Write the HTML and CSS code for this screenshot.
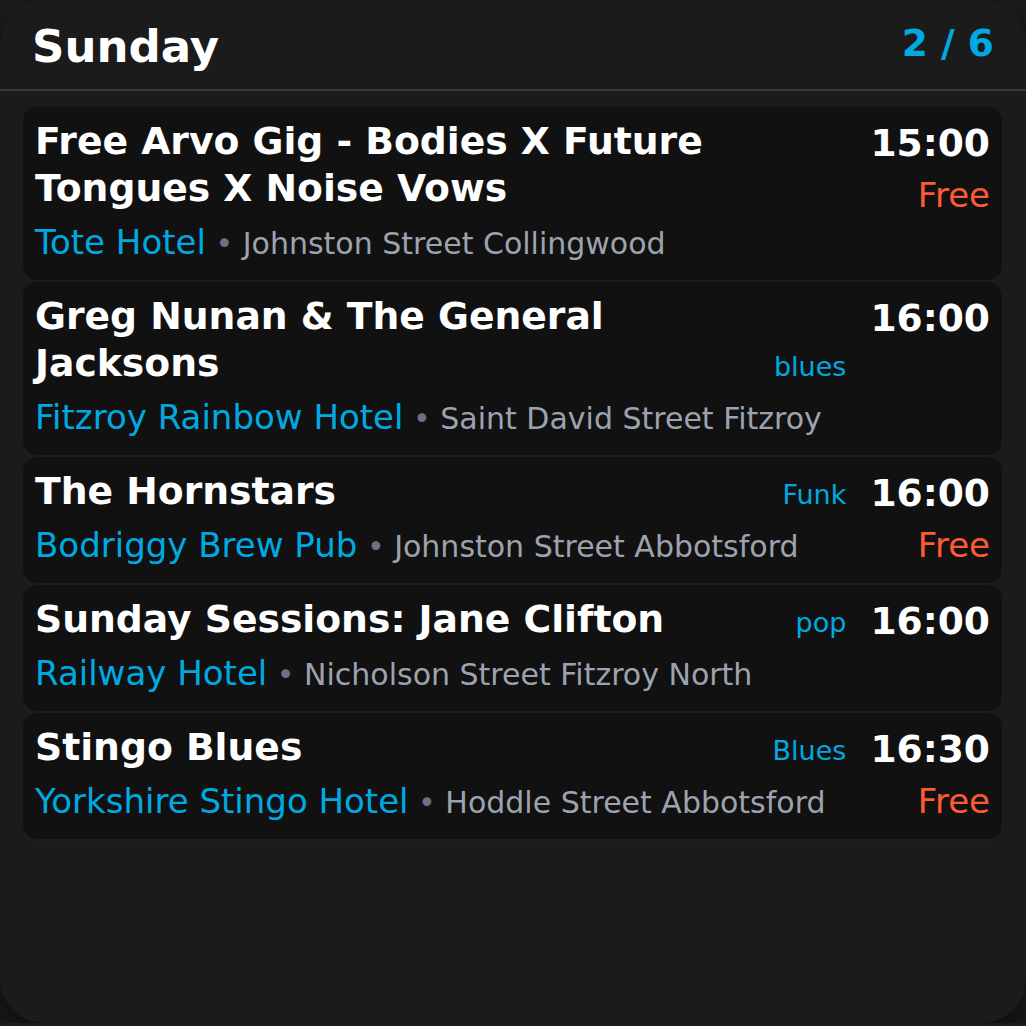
FILE: index.html
```
<!DOCTYPE html>
<html lang="en">
<head>
<meta charset="utf-8">
<title>Sunday gigs</title>
<link rel="stylesheet" href="styles.css">
</head>
<body>
<div class="app">
  <header class="head">
    <h1 class="day">Sunday</h1>
    <span class="count">2 / 6</span>
  </header>
  <ul class="list">
    <li class="card">
      <div class="main">
        <div class="top"><h2 class="title">Free Arvo Gig - Bodies X Future Tongues X Noise Vows</h2></div>
        <div class="where"><span class="venue">Tote Hotel</span><span class="addr"> <span class="dot">•</span> Johnston Street Collingwood</span></div>
      </div>
      <div class="side"><div class="time">15:00</div><div class="price">Free</div></div>
    </li>
    <li class="card">
      <div class="main">
        <div class="top"><h2 class="title">Greg Nunan &amp; The General Jacksons</h2><span class="tag">blues</span></div>
        <div class="where"><span class="venue">Fitzroy Rainbow Hotel</span><span class="addr"> <span class="dot">•</span> Saint David Street Fitzroy</span></div>
      </div>
      <div class="side"><div class="time">16:00</div></div>
    </li>
    <li class="card">
      <div class="main">
        <div class="top"><h2 class="title">The Hornstars</h2><span class="tag">Funk</span></div>
        <div class="where"><span class="venue">Bodriggy Brew Pub</span><span class="addr"> <span class="dot">•</span> Johnston Street Abbotsford</span></div>
      </div>
      <div class="side"><div class="time">16:00</div><div class="price">Free</div></div>
    </li>
    <li class="card">
      <div class="main">
        <div class="top"><h2 class="title">Sunday Sessions: Jane Clifton</h2><span class="tag">pop</span></div>
        <div class="where"><span class="venue">Railway Hotel</span><span class="addr"> <span class="dot">•</span> Nicholson Street Fitzroy North</span></div>
      </div>
      <div class="side"><div class="time">16:00</div></div>
    </li>
    <li class="card">
      <div class="main">
        <div class="top"><h2 class="title">Stingo Blues</h2><span class="tag">Blues</span></div>
        <div class="where"><span class="venue">Yorkshire Stingo Hotel</span><span class="addr"> <span class="dot">•</span> Hoddle Street Abbotsford</span></div>
      </div>
      <div class="side"><div class="time">16:30</div><div class="price">Free</div></div>
    </li>
  </ul>
</div>
</body>
</html>
```
FILE: styles.css
```
html, body {
  margin: 0;
  padding: 0;
  background: #1b1b1b;
}
body {
  font-family: "DejaVu Sans", "Liberation Sans", sans-serif;
  color: #ffffff;
}
.app {
  min-height: 1023px;
  background: #1b1b1b;
  border-radius: 44px;
  box-shadow: 0 14px 30px rgba(0, 0, 0, 0.55);
}
.head {
  display: flex;
  align-items: center;
  justify-content: space-between;
  padding: 20px 32px 16px 32px;
  border-bottom: 2px solid #363c47;
}
.day {
  margin: 0;
  font-size: 45px;
  line-height: 53px;
  font-weight: bold;
}
.count {
  margin-bottom: 6px;
  font-size: 37.6px;
  line-height: 45px;
  font-weight: bold;
  color: #00a9e0;
}
.list {
  list-style: none;
  margin: 16px 24px 0 23px;
  padding: 0;
  display: flex;
  flex-direction: column;
  gap: 2px;
}
.card {
  display: flex;
  gap: 24px;
  background: #111111;
  border-radius: 14px;
  padding: 11px 12px 14px 12px;
  box-shadow: 0 4px 16px rgba(255, 255, 255, 0.02);
}
.main {
  flex: 1 1 auto;
  min-width: 0;
}
.top {
  display: flex;
  align-items: last baseline;
  gap: 16px;
}
.title {
  flex: 1 1 auto;
  margin: 0;
  font-size: 37.7px;
  line-height: 47px;
  font-weight: bold;
}
.tag {
  flex: none;
  font-size: 27px;
  color: #00a9e0;
}
.where {
  margin-top: 6px;
  font-size: 34px;
  line-height: 48px;
  height: 48px;
  white-space: nowrap;
}
.venue {
  color: #00a9e0;
}
.addr {
  font-size: 30px;
  line-height: 1;
  color: #9ca3af;
}
.dot {
  color: #6b7280;
}
.side {
  flex: none;
  padding-top: 2px;
  text-align: right;
}
.time {
  font-size: 37.6px;
  line-height: 47px;
  font-weight: bold;
}
.price {
  margin-top: 4px;
  font-size: 34px;
  line-height: 48px;
  color: #ff5a36;
}
```
